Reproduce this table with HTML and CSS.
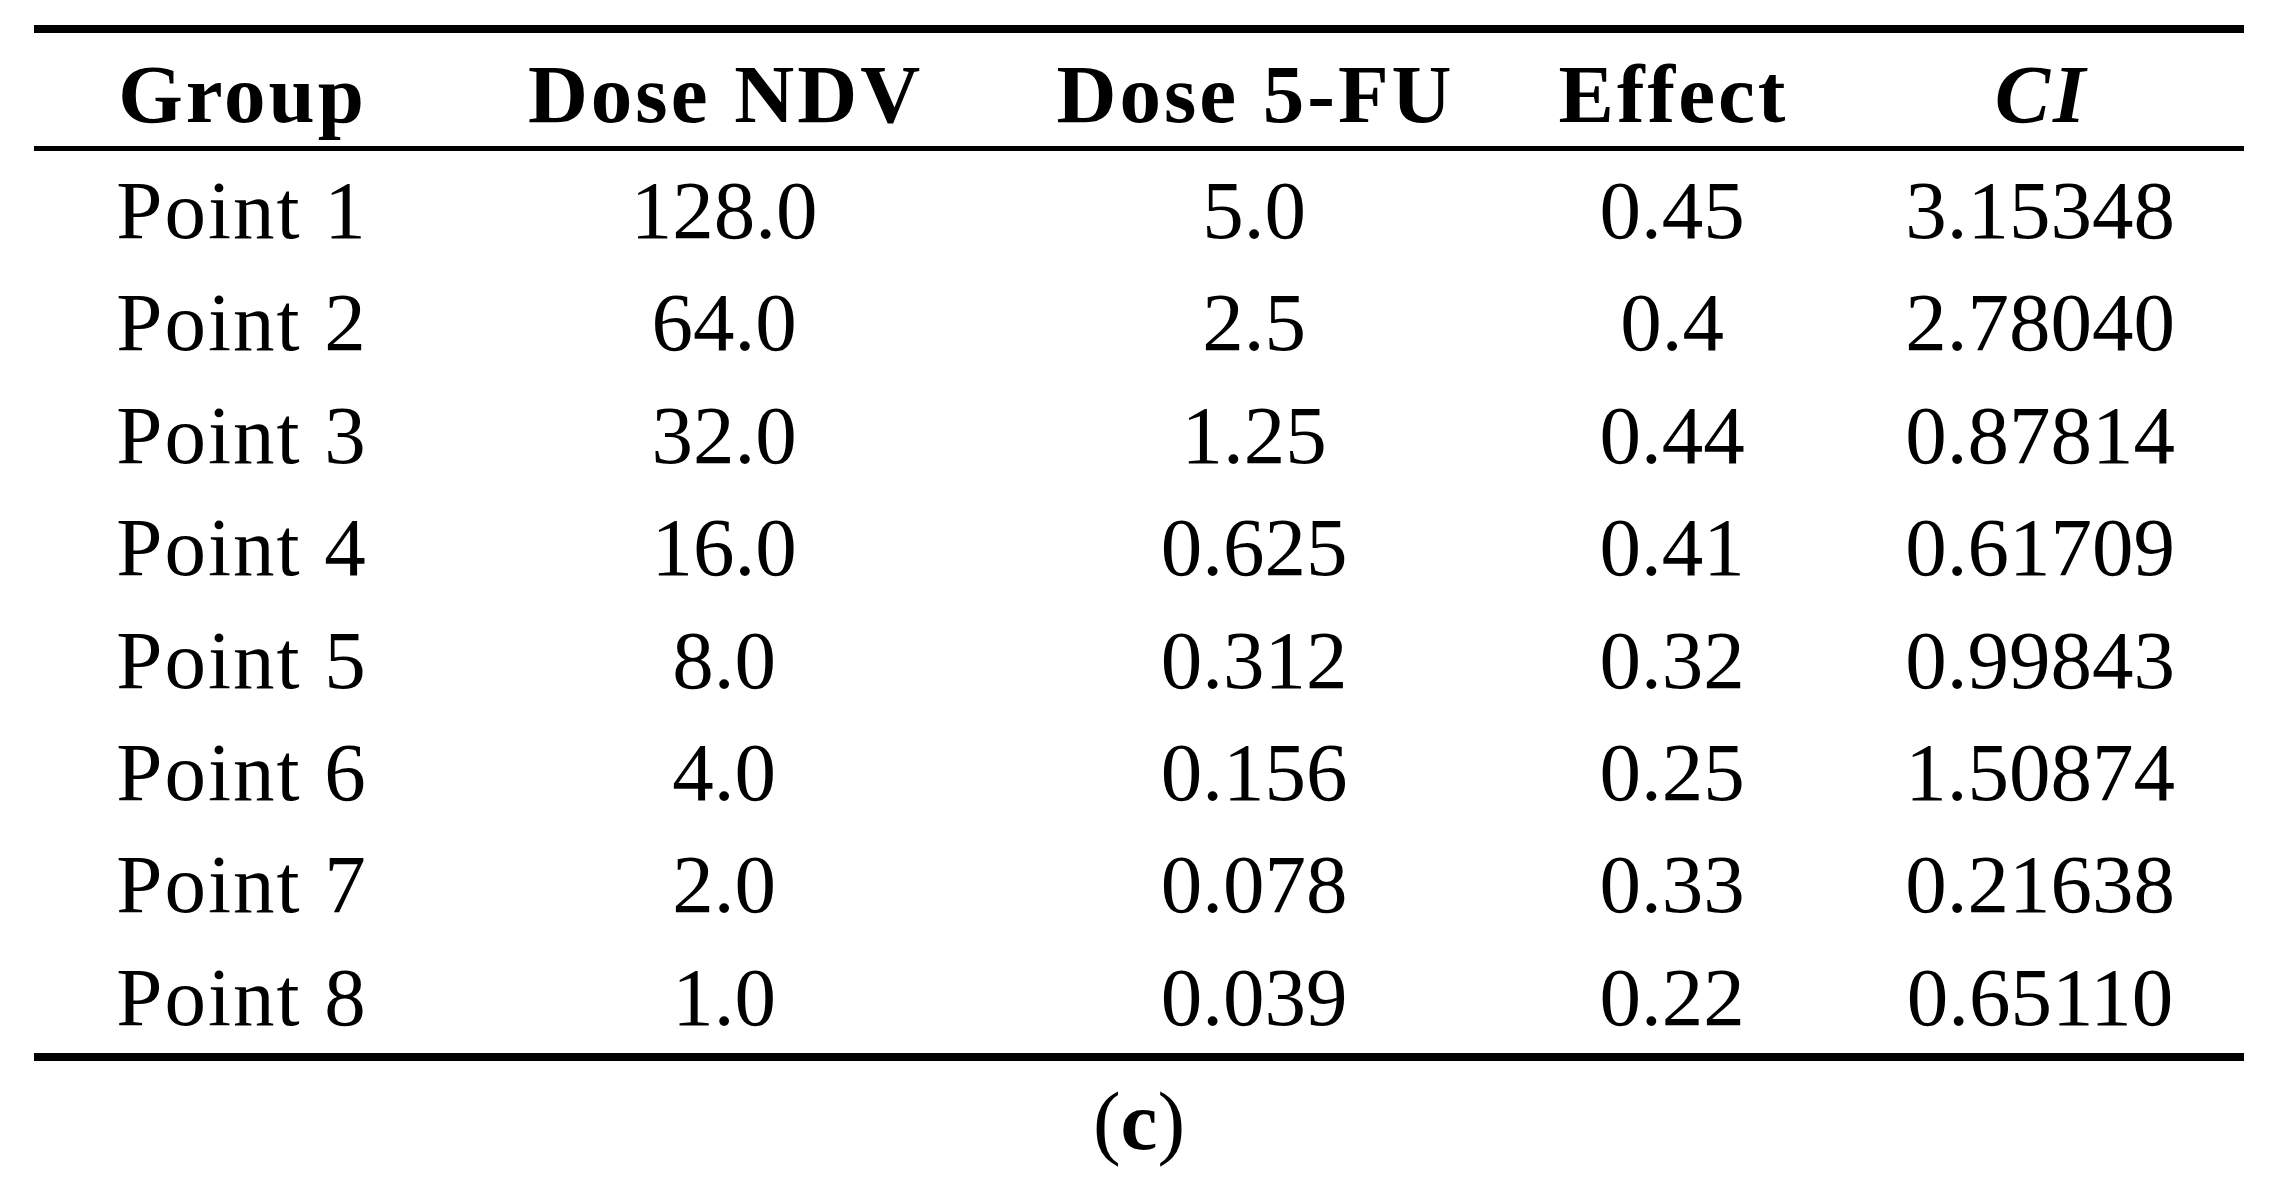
FILE: index.html
```html
<!DOCTYPE html>
<html lang="en">
<head>
<meta charset="utf-8">
<title>Table (c)</title>
<link rel="stylesheet" href="styles.css">
</head>
<body>
<div class="figure">
  <div class="table">
    <div class="row head">
      <div class="cell">Group</div>
      <div class="cell">Dose NDV</div>
      <div class="cell">Dose 5-FU</div>
      <div class="cell">Effect</div>
      <div class="cell"><i>CI</i></div>
    </div>
    <div class="body">
      <div class="row"><div class="cell label">Point 1</div><div class="cell">128.0</div><div class="cell">5.0</div><div class="cell">0.45</div><div class="cell">3.15348</div></div>
      <div class="row"><div class="cell label">Point 2</div><div class="cell">64.0</div><div class="cell">2.5</div><div class="cell">0.4</div><div class="cell">2.78040</div></div>
      <div class="row"><div class="cell label">Point 3</div><div class="cell">32.0</div><div class="cell">1.25</div><div class="cell">0.44</div><div class="cell">0.87814</div></div>
      <div class="row"><div class="cell label">Point 4</div><div class="cell">16.0</div><div class="cell">0.625</div><div class="cell">0.41</div><div class="cell">0.61709</div></div>
      <div class="row"><div class="cell label">Point 5</div><div class="cell">8.0</div><div class="cell">0.312</div><div class="cell">0.32</div><div class="cell">0.99843</div></div>
      <div class="row"><div class="cell label">Point 6</div><div class="cell">4.0</div><div class="cell">0.156</div><div class="cell">0.25</div><div class="cell">1.50874</div></div>
      <div class="row"><div class="cell label">Point 7</div><div class="cell">2.0</div><div class="cell">0.078</div><div class="cell">0.33</div><div class="cell">0.21638</div></div>
      <div class="row"><div class="cell label">Point 8</div><div class="cell">1.0</div><div class="cell">0.039</div><div class="cell">0.22</div><div class="cell">0.65110</div></div>
    </div>
  </div>
  <div class="caption">(<b>c</b>)</div>
</div>
</body>
</html>
```

FILE: styles.css
```css
html, body {
  margin: 0;
  padding: 0;
  background: #ffffff;
}

body {
  font-family: "Liberation Serif", "Times New Roman", serif;
  font-size: 83px;
  color: #000000;
}

.figure {
  width: 2210px;
  margin-left: 34px;
  padding-top: 25px;
}

.table {
  border-top: 8px solid #000;
  border-bottom: 8px solid #000;
}

.row {
  display: grid;
  grid-template-columns: 414px 552px 508px 328px 408px;
  line-height: 112.4px;
}

.cell {
  text-align: center;
  white-space: nowrap;
}

.label {
  letter-spacing: 2px;
  padding-left: 2px;
}

.head {
  font-weight: bold;
  line-height: 104px;
  padding-top: 9px;
  border-bottom: 5px solid #000;
  letter-spacing: 3px;
}

.head .cell {
  padding-left: 3px;
}

.head i {
  font-style: italic;
}

.body {
  padding-top: 3px;
}

.caption {
  text-align: center;
  line-height: 120px;
}

.caption b {
  font-weight: bold;
}
```
